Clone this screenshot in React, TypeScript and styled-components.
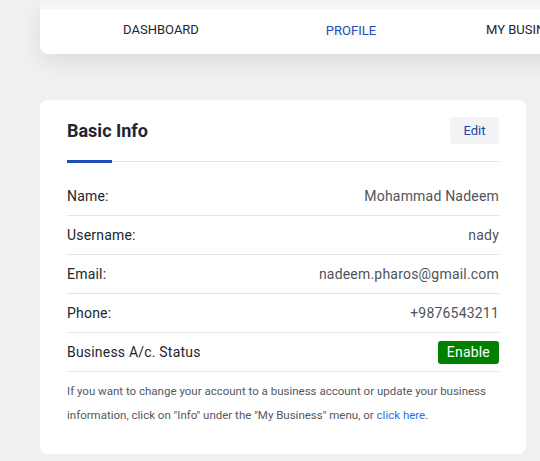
import styled, { createGlobalStyle } from "styled-components";

const GlobalStyle = createGlobalStyle`
  html, body {
    margin: 0;
    padding: 0;
    background: #f1f1f3;
    font-family: Roboto, "Liberation Sans", sans-serif;
    overflow: hidden;
  }
`;

type Field = { label: string; value: string };

const fields: Field[] = [
  { label: "Name:", value: "Mohammad Nadeem" },
  { label: "Username:", value: "nady" },
  { label: "Email:", value: "nadeem.pharos@gmail.com" },
  { label: "Phone:", value: "+9876543211" },
];

const tabs = ["DASHBOARD", "PROFILE", "MY BUSINESS"];

export default function App() {
  return (
    <Page>
      <GlobalStyle />
      <NavCard>
        <NavFade />
        <TabRow>
          {tabs.map((t) => (
            <Tab key={t} active={t === "PROFILE"}>
              {t}
            </Tab>
          ))}
        </TabRow>
      </NavCard>

      <InfoCard>
        <CardHeader>
          <Title>Basic Info</Title>
          <EditButton>Edit</EditButton>
        </CardHeader>
        <Divider />
        <List>
          {fields.map((f) => (
            <Row key={f.label}>
              <Label>{f.label}</Label>
              <Value>{f.value}</Value>
            </Row>
          ))}
          <Row>
            <Label>Business A/c. Status</Label>
            <Badge>Enable</Badge>
          </Row>
        </List>
        <Note>
          If you want to change your account to a business account or update your business
          information, click on "Info" under the "My Business" menu, or{" "}
          <NoteLink href="#">click here</NoteLink>.
        </Note>
      </InfoCard>
    </Page>
  );
}

const Page = styled.div`
  padding: 0 0 0 40px;
  display: flex;
  flex-direction: column;
  overflow: hidden;
`;

const NavCard = styled.div`
  width: 560px;
  height: 54px;
  background: #fff;
  border-radius: 0 0 8px 8px;
  box-shadow: 0 8px 24px rgba(0, 0, 0, 0.09);
  display: flex;
  flex-direction: column;
  overflow: hidden;
`;

const NavFade = styled.div`
  height: 9px;
  background: linear-gradient(#f2f2f2, #f8f8f8);
`;

const TabRow = styled.div`
  display: grid;
  grid-template-columns: 190px 190px 1fr;
  padding-left: 26px;
  height: 45px;
  align-items: center;
  margin-top: -2px;
`;

const Tab = styled.div<{ active?: boolean }>`
  font-size: 13px;
  text-align: center;
  white-space: nowrap;
  color: ${(p) => (p.active ? "#1f4fb8" : "#23262d")};
  text-shadow: ${(p) => (p.active ? "0 3px 6px rgba(0,0,0,0.12)" : "none")};
  margin-top: ${(p) => (p.active ? "2px" : "0")};

  &:last-child {
    text-align: left;
    padding-left: 40px;
  }
`;

const InfoCard = styled.div`
  margin-top: 46px;
  width: 486px;
  box-sizing: border-box;
  background: #fff;
  border-radius: 8px;
  padding: 17px 27px 27px;
`;

const CardHeader = styled.div`
  display: flex;
  justify-content: space-between;
  align-items: center;
  height: 27px;
`;

const Title = styled.h2`
  margin: 0;
  font-size: 18px;
  font-weight: 700;
  color: #1f2533;
`;

const EditButton = styled.button`
  width: 49px;
  height: 27px;
  border: none;
  border-radius: 4px;
  background: #f3f3f5;
  color: #1c44a8;
  font-family: inherit;
  font-size: 13px;
  cursor: pointer;
`;

const Divider = styled.div`
  position: relative;
  margin-top: 17px;
  height: 1px;
  background: #e4e4e6;

  &::before {
    content: "";
    position: absolute;
    left: 0;
    top: -1px;
    width: 45px;
    height: 3px;
    background: #1f4fb8;
  }
`;

const List = styled.div`
  margin-top: 15px;
  display: flex;
  flex-direction: column;
`;

const Row = styled.div`
  display: flex;
  justify-content: space-between;
  align-items: center;
  height: 38px;
  border-bottom: 1px solid #e4e4e6;
  font-size: 14px;
  letter-spacing: 0.2px;
`;

const Label = styled.span`
  color: #23262d;
`;

const Value = styled.span`
  color: #505359;
`;

const Badge = styled.span`
  background: #008000;
  color: #fff;
  border-radius: 3px;
  padding: 0 9px;
  height: 23px;
  line-height: 23px;
  font-size: 14px;
  margin-top: 1px;
`;

const Note = styled.p`
  margin: 8px 0 0;
  font-size: 11.5px;
  line-height: 23.5px;
  color: #55585e;
`;

const NoteLink = styled.a`
  color: #1a73e8;
  text-decoration: none;
`;
